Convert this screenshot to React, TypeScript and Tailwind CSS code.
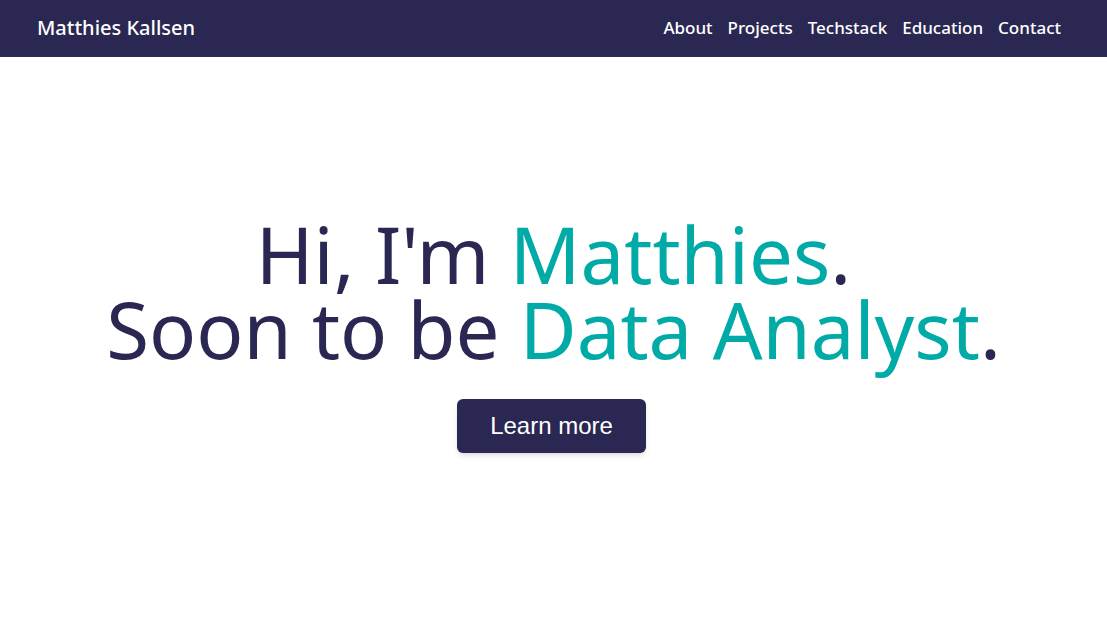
export default function App() {
  return (
    <div className="min-h-screen bg-white flex flex-col" style={{ fontFamily: '"Noto Sans", sans-serif' }}>
      {/* Navbar */}
      <nav className="h-[57px] bg-[#2a2852] flex items-center justify-between pl-[37px] pr-[46px] pb-[2px] text-white">
        <span className="text-[20px] font-medium">Matthies Kallsen</span>
        <div className="flex items-center gap-[15px] text-[17px] font-medium">
          <a href="#about">About</a>
          <a href="#projects">Projects</a>
          <a href="#techstack">Techstack</a>
          <a href="#education">Education</a>
          <a href="#contact">Contact</a>
        </div>
      </nav>

      {/* Hero */}
      <main className="flex flex-col items-center pt-[160px]">
        <h1 className="text-[78px] leading-[75px] text-[#2a2852] text-center font-normal">
          Hi, I'm <span className="text-[#00aaa6]">Matthies</span>.
          <br />
          Soon to be <span className="text-[#00aaa6]">Data Analyst</span>.
        </h1>
        <button
          className="mt-[32px] mr-[4px] w-[189px] h-[54px] rounded-md bg-[#2a2852] text-white text-[24px] shadow-md"
          style={{ fontFamily: '"Liberation Sans", Arial, sans-serif' }}
        >
          Learn more
        </button>
      </main>
    </div>
  )
}
